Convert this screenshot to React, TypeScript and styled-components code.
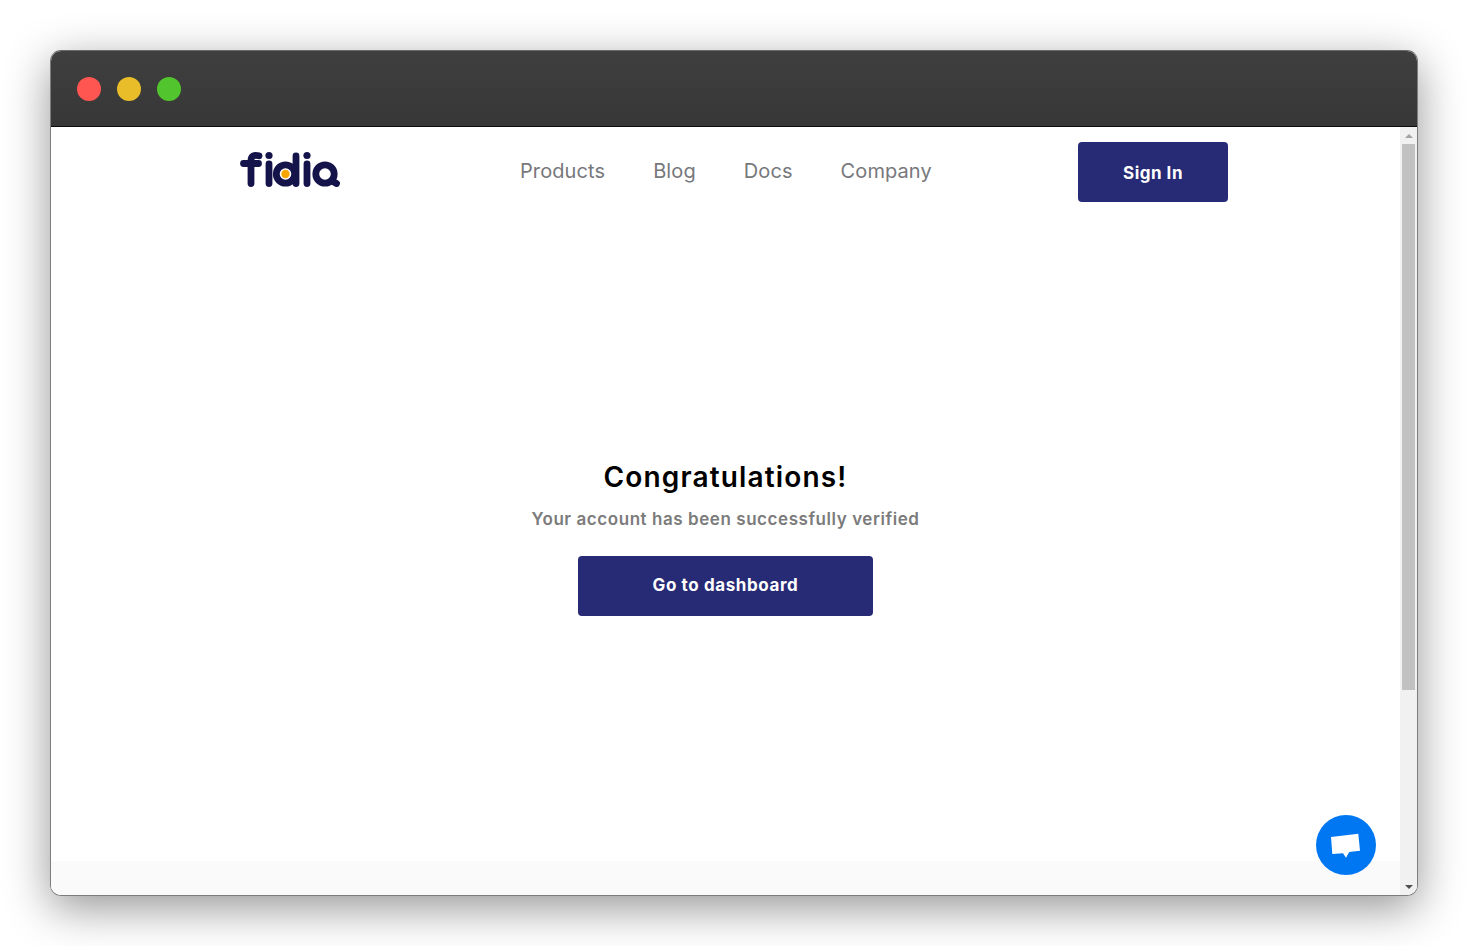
import React from "react";
import styled, { createGlobalStyle } from "styled-components";

const GlobalStyle = createGlobalStyle`
  html, body {
    margin: 0;
    padding: 0;
    background: #fff;
  }
  body {
    font-family: "Inter", "Liberation Sans", sans-serif;
  }
`;

const Logo = () => (
  <svg width="108" height="46" viewBox="0 0 108 46" fill="none" aria-label="fidia">
    <g stroke="#14144a" strokeWidth="6.8" strokeLinecap="round">
      <path d="M23 9.8 C18 8.5 15 10 15 14.5 V37.5" />
      <path d="M7.5 17.5 H22.5" />
      <path d="M33 18 V37.5" />
      <path d="M60 10 V37.5" />
      <circle cx="49.5" cy="28" r="9.2" />
      <path d="M71 18 V37.5" />
      <circle cx="89" cy="28" r="9.2" />
      <path d="M97 35.5 L100.5 37.5" />
    </g>
    <circle cx="33" cy="9.5" r="3.6" fill="#14144a" />
    <circle cx="71" cy="9.5" r="3.6" fill="#14144a" />
    <circle cx="49.5" cy="28" r="4.2" fill="#f7a600" />
  </svg>
);

const App = () => {
  return (
    <Page>
      <GlobalStyle />
      <Window>
        <TitleBar>
          <Light $color="#ff5652" />
          <Light $color="#e8bd29" />
          <Light $color="#52c42e" />
        </TitleBar>
        <Body>
          <Content>
            <Header>
              <LogoWrap>
                <Logo />
              </LogoWrap>
              <Nav>
                <NavLink>Products</NavLink>
                <NavLink>Blog</NavLink>
                <NavLink>Docs</NavLink>
                <NavLink>Company</NavLink>
              </Nav>
              <SignIn>Sign In</SignIn>
            </Header>
            <Main>
              <Title>Congratulations!</Title>
              <Subtitle>Your account has been successfully verified</Subtitle>
              <DashboardButton>Go to dashboard</DashboardButton>
            </Main>
            <Footer />
          </Content>
          <Scrollbar>
            <ArrowUp />
            <Thumb />
            <ArrowDown />
          </Scrollbar>
          <ChatButton>
            <svg width="30" height="26" viewBox="0 0 30 26">
              <path d="M0 5 L27.3 1.7 L29 18.7 L18.2 20 L15 25.7 L12 21.2 L1.3 22 Z" fill="#fff" />
            </svg>
          </ChatButton>
        </Body>
      </Window>
    </Page>
  );
};

const Page = styled.div`
  width: 1468px;
  height: 946px;
  padding: 50px;
  box-sizing: border-box;
  overflow: hidden;
`;

const Window = styled.div`
  width: 1368px;
  height: 846px;
  box-sizing: border-box;
  display: flex;
  flex-direction: column;
  border: 1px solid #7d7d7d;
  border-top-color: #6a6a6a;
  border-radius: 11px;
  overflow: hidden;
  box-shadow: 0 12px 45px rgba(0, 0, 0, 0.42);
`;

const TitleBar = styled.div`
  height: 75px;
  flex: none;
  display: flex;
  align-items: center;
  gap: 16px;
  padding: 0 0 0 26px;
  background: linear-gradient(#3f3f3f, #373737);
  border-bottom: 1px solid #0c0c0c;
`;

const Light = styled.span<{ $color: string }>`
  width: 24px;
  height: 24px;
  border-radius: 50%;
  background: ${(p) => p.$color};
`;

const Body = styled.div`
  position: relative;
  flex: 1;
  min-height: 0;
  display: flex;
  background: #fff;
`;

const Content = styled.div`
  flex: 1;
  min-width: 0;
  display: flex;
  flex-direction: column;
`;

const Header = styled.header`
  flex: none;
  display: flex;
  align-items: center;
  padding: 15px 172px 0 185px;
`;

const LogoWrap = styled.div`
  width: 284px;
  height: 60px;
  padding-top: 4px;
  box-sizing: border-box;
`;

const Nav = styled.nav`
  display: flex;
  gap: 48px;
  margin-top: -3px;
`;

const NavLink = styled.a`
  font-size: 20px;
  line-height: 24px;
  color: #77787c;
  letter-spacing: 0.1px;
`;

const SignIn = styled.button`
  margin-left: auto;
  width: 150px;
  height: 60px;
  padding: 2px 0 0;
  border: none;
  border-radius: 4px;
  background: #272a74;
  color: #fff;
  font-family: inherit;
  font-size: 17px;
  font-weight: 700;
  letter-spacing: 0.5px;
`;

const Main = styled.main`
  flex: 1;
  display: flex;
  flex-direction: column;
  align-items: center;
  padding-top: 257px;
  box-sizing: border-box;
`;

const Title = styled.h1`
  margin: 0;
  font-size: 28px;
  line-height: 36px;
  font-weight: 600;
  letter-spacing: 1.15px;
  color: #000;
`;

const Subtitle = styled.p`
  margin: 12px 0 0;
  font-size: 17px;
  line-height: 24px;
  font-weight: 600;
  letter-spacing: 0.56px;
  color: #7b7b7b;
`;

const DashboardButton = styled.button`
  margin-top: 25px;
  width: 295px;
  height: 60px;
  padding: 0 0 2px;
  border: none;
  border-radius: 4px;
  background: #272a74;
  color: #fff;
  font-family: inherit;
  font-size: 17px;
  font-weight: 700;
  letter-spacing: 0.6px;
`;

const Footer = styled.div`
  flex: none;
  height: 34px;
  background: #fafafa;
`;

const Scrollbar = styled.div`
  flex: none;
  width: 17px;
  display: flex;
  flex-direction: column;
  align-items: center;
  background: #f1f1f1;
`;

const ArrowUp = styled.div`
  margin-top: 7px;
  width: 0;
  height: 0;
  border-left: 4px solid transparent;
  border-right: 4px solid transparent;
  border-bottom: 4px solid #a3a3a3;
`;

const Thumb = styled.div`
  margin-top: 6px;
  width: 13px;
  height: 546px;
  background: #c1c1c1;
`;

const ArrowDown = styled.div`
  margin-top: auto;
  margin-bottom: 6px;
  width: 0;
  height: 0;
  border-left: 4px solid transparent;
  border-right: 4px solid transparent;
  border-top: 4px solid #505050;
`;

const ChatButton = styled.div`
  position: absolute;
  left: 1265px;
  top: 688px;
  width: 60px;
  height: 60px;
  border-radius: 50%;
  background: #0077f2;
  display: flex;
  align-items: center;
  justify-content: center;
`;

export default App;
